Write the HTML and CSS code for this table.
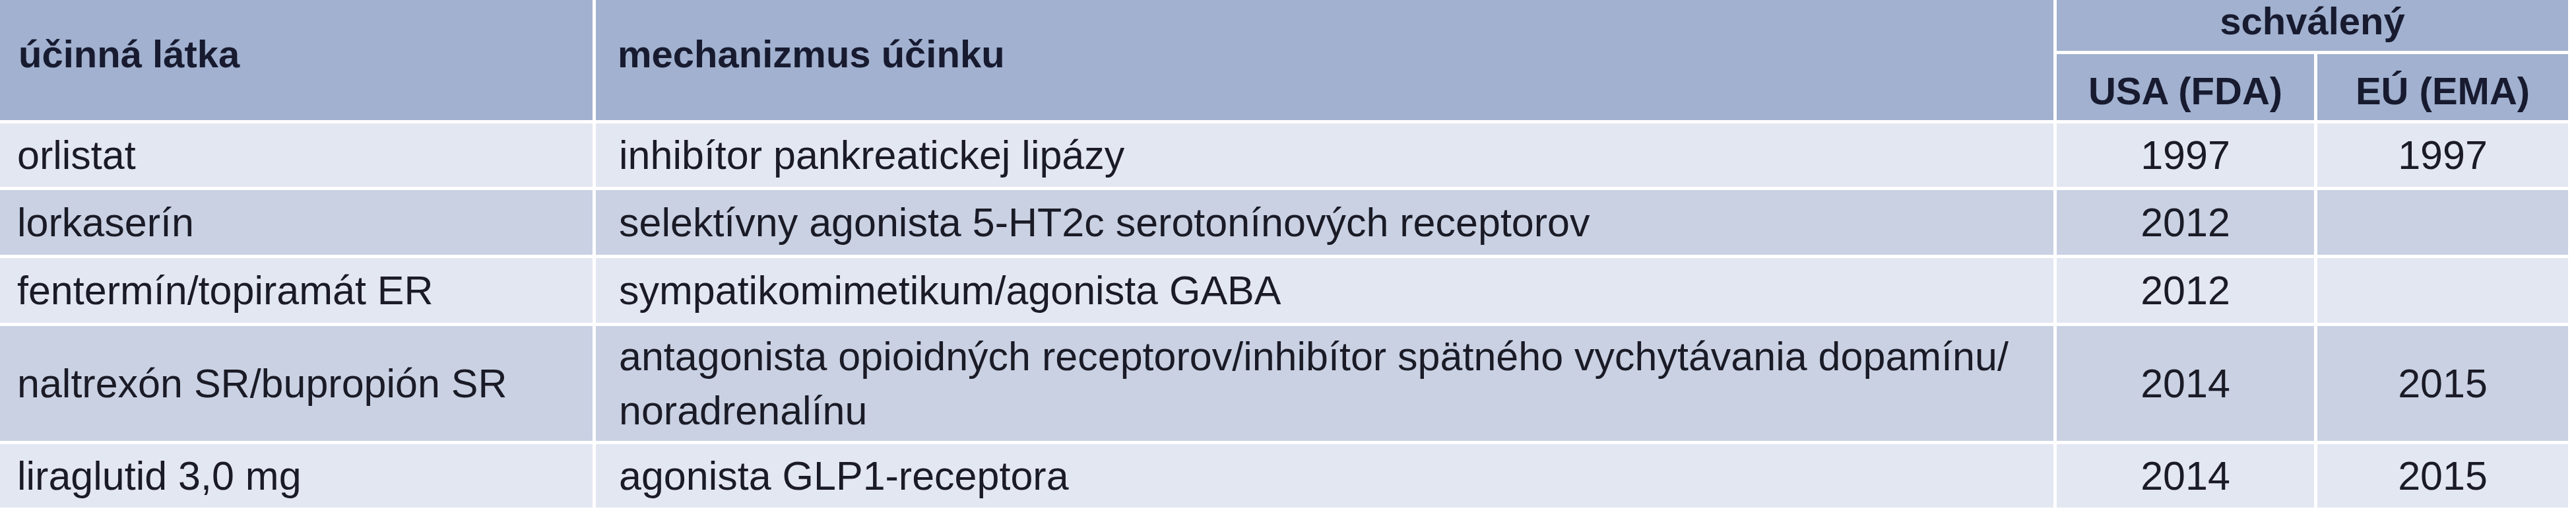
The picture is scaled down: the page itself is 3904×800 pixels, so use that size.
FILE: index.html
```html
<!DOCTYPE html>
<html lang="sk">
<head>
<meta charset="utf-8">
<title>Lieky na liečbu obezity</title>
<link rel="stylesheet" href="styles.css">
</head>
<body>
<div class="table" role="table">
  <div class="cell head h-substance" role="columnheader">účinná látka</div>
  <div class="cell head h-mech" role="columnheader">mechanizmus účinku</div>
  <div class="cell head h-approved" role="columnheader">schválený</div>
  <div class="cell head h-year" role="columnheader">USA (FDA)</div>
  <div class="cell head h-year" role="columnheader">EÚ (EMA)</div>

  <div class="cell light r1">orlistat</div>
  <div class="cell light r1 mech">inhibítor pankreatickej lipázy</div>
  <div class="cell light r1 year">1997</div>
  <div class="cell light r1 year">1997</div>

  <div class="cell dark r2">lorkaserín</div>
  <div class="cell dark r2 mech">selektívny agonista 5-HT2c serotonínových receptorov</div>
  <div class="cell dark r2 year">2012</div>
  <div class="cell dark r2 year"></div>

  <div class="cell light r3">fentermín/topiramát ER</div>
  <div class="cell light r3 mech">sympatikomimetikum/agonista GABA</div>
  <div class="cell light r3 year">2012</div>
  <div class="cell light r3 year"></div>

  <div class="cell dark r4">naltrexón SR/bupropión SR</div>
  <div class="cell dark r4 mech">antagonista opioidných receptorov/inhibítor spätného vychytávania dopamínu/<br>noradrenalínu</div>
  <div class="cell dark r4 year">2014</div>
  <div class="cell dark r4 year">2015</div>

  <div class="cell light r5">liraglutid 3,0 mg</div>
  <div class="cell light r5 mech">agonista GLP1-receptora</div>
  <div class="cell light r5 year">2014</div>
  <div class="cell light r5 year">2015</div>
</div>
</body>
</html>
```

FILE: styles.css
```css
html, body {
  margin: 0;
  padding: 0;
  background: #ffffff;
}

body {
  font-family: "Liberation Sans", Arial, sans-serif;
  font-size: 61px;
  line-height: 82px;
  color: #1a1b26;
}

.table {
  display: grid;
  width: 3892px;
  grid-template-columns: 898px 2209px 390px 380px;
  grid-template-rows: 77px 100px 96px 98px 98px 174px 96px;
  gap: 5px;
  background: #ffffff;
}

.cell {
  display: flex;
  align-items: center;
  padding-left: 26px;
  white-space: nowrap;
}

.cell.mech {
  padding-left: 35px;
}

.head {
  background: #a1b1cf;
  font-weight: bold;
  font-size: 58px;
  color: #181b30;
}

.h-substance {
  grid-column: 1;
  grid-row: 1 / span 2;
  padding-left: 28px;
  padding-bottom: 18px;
}

.h-mech {
  grid-column: 2;
  grid-row: 1 / span 2;
  padding-left: 33px;
  padding-bottom: 18px;
}

.h-approved {
  grid-column: 3 / span 2;
  grid-row: 1;
  justify-content: center;
  padding-left: 0;
  line-height: 60px;
  padding-bottom: 14px;
}

.h-year {
  grid-row: 2;
  justify-content: center;
  padding-left: 0;
  padding-top: 12px;
}

.light {
  background: #e3e7f2;
}

.dark {
  background: #c9d1e3;
}

.year {
  justify-content: center;
  padding-left: 0;
}
```
